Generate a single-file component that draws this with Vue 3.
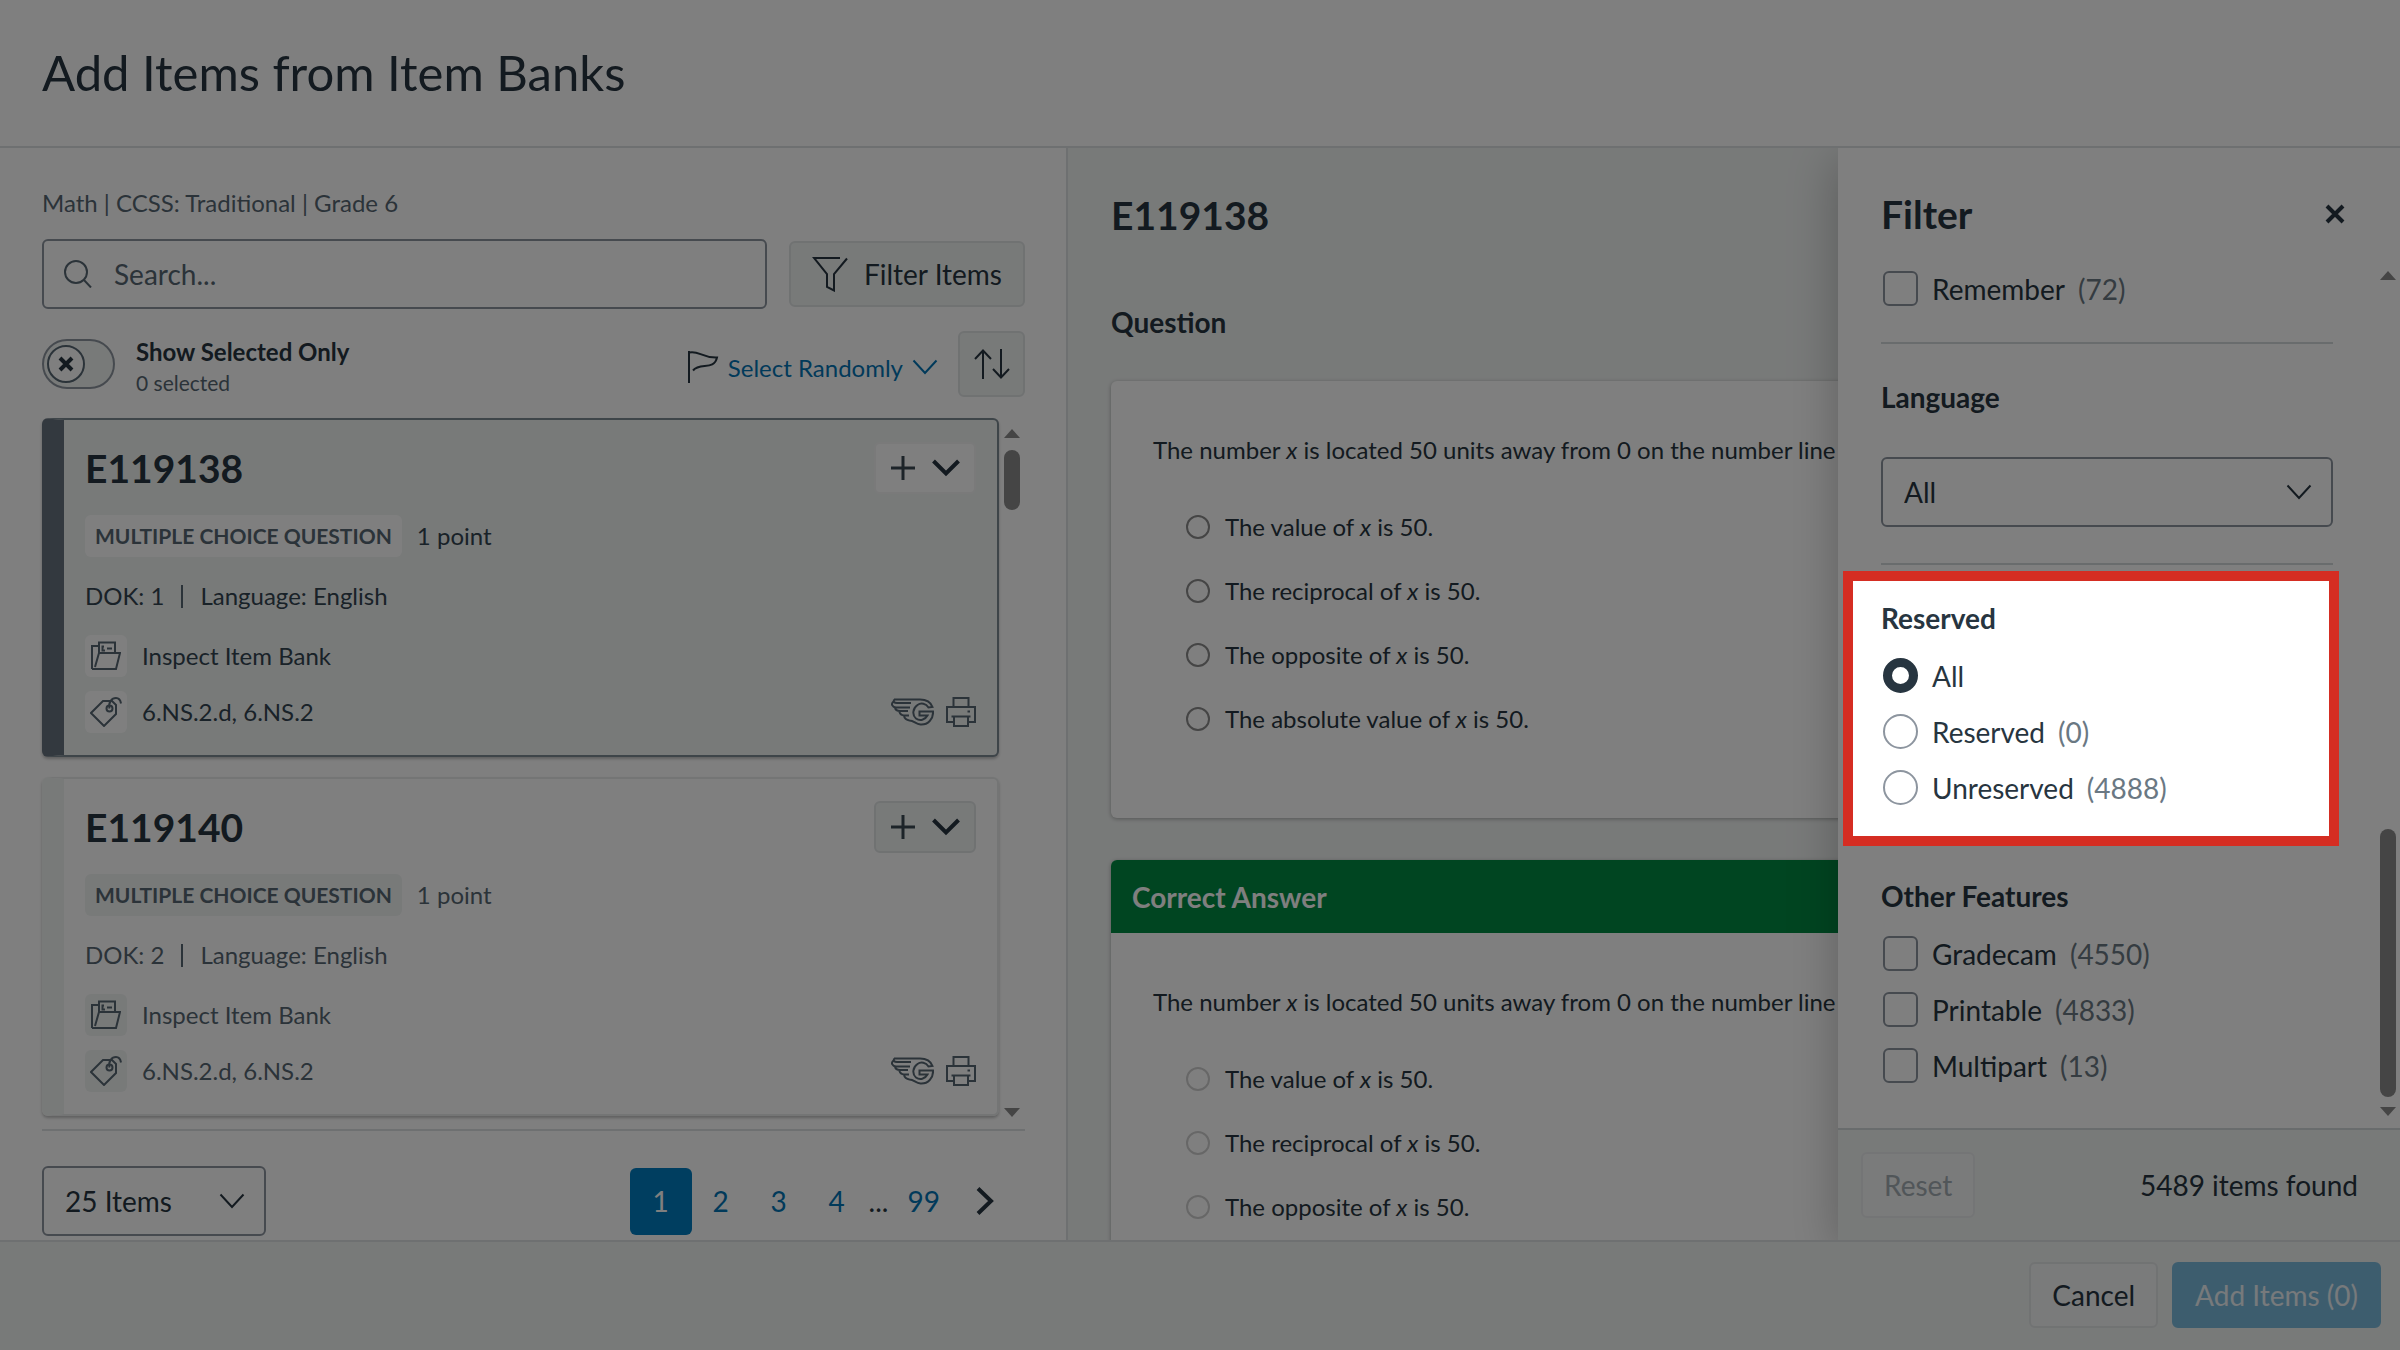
<script setup>
import { ref } from 'vue'

const items = [
  { id: 'E119138', points: '1 point', dok: 1, active: true },
  { id: 'E119140', points: '1 point', dok: 2, active: false },
]

const answers = ['value', 'reciprocal', 'opposite', 'absolute value']

const pages = [2, 3, 4]

const reservedOptions = [
  { value: 'all', label: 'All', count: '' },
  { value: 'reserved', label: 'Reserved', count: '(0)' },
  { value: 'unreserved', label: 'Unreserved', count: '(4888)' },
]

const features = [
  { label: 'Gradecam', count: '(4550)' },
  { label: 'Printable', count: '(4833)' },
  { label: 'Multipart', count: '(13)' },
]

const search = ref('')
const showSelected = ref(false)
const reserved = ref('all')
const language = ref('All')
const pageSize = ref('25 Items')
</script>

<template>
  <div class="page">
    <header class="page-header">
      <h1>Add Items from Item Banks</h1>
    </header>

    <main class="body">
      <section class="browser">
        <p class="crumbs">Math | CCSS: Traditional | Grade 6</p>

        <div class="search-row">
          <label class="search">
            <svg class="icon" width="28" height="28" viewBox="0 0 28 28" aria-hidden="true">
              <circle cx="12" cy="12" r="11" />
              <path d="M19.500 19.500 L27 27.500" />
            </svg>
            <input v-model="search" type="text" placeholder="Search..." aria-label="Search items" />
          </label>
          <button type="button" class="btn filter-btn">
            <svg class="icon dark" width="36" height="36" viewBox="0 0 36 36" aria-hidden="true">
              <path d="M28 2 H2 L15 18 V31 L22 34.500 V18 L35 2.500" />
            </svg>
            Filter Items
          </button>
        </div>

        <div class="tool-row">
          <label class="toggle">
            <span class="switch">
              <input v-model="showSelected" type="checkbox" />
              <span class="knob">
                <svg width="16" height="16" viewBox="0 0 16 16" aria-hidden="true">
                  <path d="M2 2 L14 14 M14 2 L2 14" />
                </svg>
              </span>
            </span>
            <span class="toggle-text">
              <b>Show Selected Only</b>
              <small>0 selected</small>
            </span>
          </label>
          <a class="random" href="#">
            <svg class="icon dark" width="32" height="34" viewBox="0 0 32 34" aria-hidden="true">
              <path d="M2 1 V33 M2 2.500 C12 0 14 8 30 7.500 C27 21 13 12 6 20.500" />
            </svg>
            Select Randomly
            <svg class="icon link-icon" width="26" height="16" viewBox="0 0 26 16" aria-hidden="true">
              <path d="M1.500 1.500 L13 14 L24.500 1.500" />
            </svg>
          </a>
          <button type="button" class="btn sort-btn" aria-label="Sort">
            <svg class="icon dark" width="36" height="32" viewBox="0 0 36 32" aria-hidden="true">
              <path d="M9 31 V3 M1 11 L9 2.500 L17 11 M27 1 V29 M19 21 L27 29.500 L35 21" />
            </svg>
          </button>
        </div>

        <div class="list-area">
          <div class="list">
            <article v-for="item in items" :key="item.id" class="card" :class="{ active: item.active }">
              <div class="card-head">
                <h2>{{ item.id }}</h2>
                <div class="add-group">
                  <button type="button" aria-label="Add item">
                    <svg width="24" height="24" viewBox="0 0 24 24" aria-hidden="true">
                      <path class="plus" d="M12 0 V24 M0 12 H24" />
                    </svg>
                  </button>
                  <button type="button" aria-label="More options">
                    <svg width="28" height="18" viewBox="0 0 28 18" aria-hidden="true">
                      <path d="M1.500 2 L14 14.500 L26.500 2" />
                    </svg>
                  </button>
                </div>
              </div>
              <div class="card-line">
                <span class="type">MULTIPLE CHOICE QUESTION</span>
                <span>{{ item.points }}</span>
              </div>
              <div class="card-meta">
                <span>DOK: {{ item.dok }}</span>
                <i class="bar"></i>
                <span>Language: English</span>
              </div>
              <div class="card-foot">
                <div class="sources">
                  <div class="source">
                    <span class="chip">
                      <svg class="icon" width="30" height="30" viewBox="0 0 30 30" aria-hidden="true">
                        <path d="M1 28 V5 H8 M1 28 H25 L29 12 H8 L4 26 M8 12 V1.500 H24 V12 M13 5.500 H11.500 V9.500 H14 M16 7.500 H21" />
                      </svg>
                    </span>
                    Inspect Item Bank
                  </div>
                  <div class="source">
                    <span class="chip">
                      <svg class="icon" width="32" height="30" viewBox="0 0 32 30" aria-hidden="true">
                        <path d="M13 4 H22 L26 8 V17 L14 29 L1 16 Z" />
                        <circle cx="19.500" cy="11.500" r="3" />
                        <path d="M19.500 11.500 C18 5 22 1 26 1 C29 1 30.500 3.500 31 6.500" />
                      </svg>
                    </span>
                    6.NS.2.d, 6.NS.2
                  </div>
                </div>
                <div class="formats">
                  <svg class="icon" width="43" height="28" viewBox="0 0 43 28" aria-hidden="true">
                    <path d="M3 1.500 H29 C36 1.500 40 5 41.500 9 L37.500 9.500 C35 5.500 30 4.500 26.500 7 C21.500 10.500 21 17 25 20.500 C29 23.500 34 22 36.500 17.500 H28.500 V13.500 H42 C42.500 21 37 27 29.500 26.500 C24.500 26 23 22.500 18.500 22.500 C15.500 22 13.500 20 13 18 M3 1.500 C2.500 4 3 5 6 5 H20 M2.500 3.500 C-0.500 6 1.500 9.500 5 9.500 H19 M4 9.500 C4.500 12.500 6.500 13 9 13 H17 M8 13 C9 16 11 17.500 13 17.500 H18" />
                  </svg>
                  <svg class="icon" width="30" height="30" viewBox="0 0 30 30" aria-hidden="true">
                    <path d="M7.500 10 V1 H22.500 V10 M7.500 25 H1 V10 H29 V25 H22.500 M5.500 19.500 H24.500 M8 19.500 V29 H22 V19.500 M21.500 14.500 H24" />
                  </svg>
                </div>
              </div>
            </article>
          </div>
          <div class="scroller" aria-hidden="true">
            <i class="up"></i>
            <i class="thumb short"></i>
            <i class="down"></i>
          </div>
        </div>

        <div class="pager">
          <div class="select small-select">
            <select v-model="pageSize" aria-label="Items per page">
              <option>25 Items</option>
            </select>
            <svg class="icon dark" width="26" height="16" viewBox="0 0 26 16" aria-hidden="true">
              <path d="M1.500 1.500 L13 14 L24.500 1.500" />
            </svg>
          </div>
          <nav class="pages" aria-label="Pages">
            <button type="button" class="current">1</button>
            <button v-for="page in pages" :key="page" type="button">{{ page }}</button>
            <span class="dots">...</span>
            <button type="button">99</button>
            <button type="button" aria-label="Next page">
              <svg width="18" height="28" viewBox="0 0 18 28" aria-hidden="true">
                <path d="M2 1.500 L15 14 L2 26.500" />
              </svg>
            </button>
          </nav>
        </div>
      </section>

      <section class="preview">
        <h2>E119138</h2>
        <h3>Question</h3>
        <div class="question">
          <div class="question-body">
            <p>The number <em>x</em> is located 50 units away from 0 on the number line</p>
            <div class="options">
              <label v-for="answer in answers" :key="answer">
                <input type="radio" name="question" />
                <span>The {{ answer }} of <em>x</em> is 50.</span>
              </label>
            </div>
          </div>
        </div>
        <div class="question">
          <h3 class="correct">Correct Answer</h3>
          <div class="question-body">
            <p>The number <em>x</em> is located 50 units away from 0 on the number line</p>
            <div class="options">
              <label v-for="answer in answers.slice(0, 3)" :key="answer">
                <input type="radio" name="solution" disabled />
                <span>The {{ answer }} of <em>x</em> is 50.</span>
              </label>
            </div>
          </div>
        </div>
      </section>

      <aside class="drawer">
        <div class="drawer-head">
          <h2>Filter</h2>
          <button type="button" aria-label="Close">
            <svg width="20" height="20" viewBox="0 0 20 20" aria-hidden="true">
              <path d="M2 2 L18 18 M18 2 L2 18" />
            </svg>
          </button>
        </div>
        <div class="drawer-scroll">
          <div class="drawer-content">
            <section class="group">
              <label class="choice">
                <input type="checkbox" />
                <span>Remember</span>
                <span class="count">(72)</span>
              </label>
            </section>
            <hr />
            <section class="group">
              <label class="group-title" for="language">Language</label>
              <div class="select wide-select">
                <select id="language" v-model="language">
                  <option>All</option>
                </select>
                <svg class="icon dark" width="26" height="16" viewBox="0 0 26 16" aria-hidden="true">
                  <path d="M1.500 1.500 L13 14 L24.500 1.500" />
                </svg>
              </div>
            </section>
            <hr />
            <section class="group spotlight">
              <h3 class="group-title">Reserved</h3>
              <label v-for="option in reservedOptions" :key="option.value" class="choice">
                <input v-model="reserved" type="radio" name="reserved" :value="option.value" />
                <span>{{ option.label }}</span>
                <span v-if="option.count" class="count">{{ option.count }}</span>
              </label>
            </section>
            <hr />
            <section class="group">
              <h3 class="group-title">Other Features</h3>
              <label v-for="feature in features" :key="feature.label" class="choice">
                <input type="checkbox" />
                <span>{{ feature.label }}</span>
                <span class="count">{{ feature.count }}</span>
              </label>
            </section>
          </div>
          <div class="scroller" aria-hidden="true">
            <i class="up"></i>
            <i class="thumb long"></i>
            <i class="down"></i>
          </div>
        </div>
        <div class="drawer-foot">
          <button type="button" class="btn ghost" disabled>Reset</button>
          <span>5489 items found</span>
        </div>
      </aside>
    </main>

    <footer class="page-footer">
      <button type="button" class="btn ghost">Cancel</button>
      <button type="button" class="btn primary" disabled>Add Items (0)</button>
    </footer>
  </div>
</template>

<style>
body {
  margin: 0;
}
</style>

<style scoped>
* {
  box-sizing: border-box;
}

.page {
  --ink: #273540;
  --soft: #576773;
  --edge: #8d959f;
  --line: #dce1e2;
  --mist: #f1f4f3;
  --link: #0374b5;
  position: relative;
  display: flex;
  flex-direction: column;
  height: 100vh;
  overflow: hidden;
  background: #fff;
  color: var(--ink);
  font-family: Lato, "Liberation Sans", sans-serif;
  font-size: 28px;
  line-height: 36px;
}

h1,
h2,
h3,
p {
  margin: 0;
}

h1 {
  font-size: 49px;
  line-height: 56px;
  font-weight: 400;
}

h2 {
  font-size: 39px;
  line-height: 48px;
  font-weight: 700;
}

h3 {
  font-size: 28px;
  line-height: 36px;
  font-weight: 700;
}

button,
input,
select {
  margin: 0;
  font: inherit;
  color: inherit;
}

button {
  padding: 0;
  border: 0;
  background: none;
}

svg {
  display: block;
  flex: none;
  fill: none;
  stroke: var(--ink);
  stroke-width: 4px;
}

.icon {
  stroke: var(--soft);
  stroke-width: 2px;
}

.icon.dark {
  stroke: var(--ink);
}

.icon.link-icon {
  stroke: var(--link);
}

.plus {
  stroke: #3a4853;
  stroke-width: 3px;
}

.page-header,
.page-footer {
  position: relative;
  z-index: 1;
  flex: none;
}

.page-header {
  display: flex;
  align-items: center;
  padding: 44px 42px 46px;
  border-bottom: 2px solid var(--line);
  background: #fff;
}

.body {
  position: relative;
  display: flex;
  flex: 1;
  min-height: 0;
}

.btn {
  display: flex;
  align-items: center;
  justify-content: center;
  height: 66px;
  padding: 0 21px;
  border: 2px solid #e0e4e5;
  border-radius: 6px;
  background: var(--mist);
}

/* Item list */

.browser {
  display: flex;
  flex: none;
  flex-direction: column;
  width: 44.5%;
  padding: 37px 41px 0 42px;
  border-right: 2px solid var(--line);
}

.crumbs {
  color: var(--soft);
  font-size: 24px;
}

.search-row {
  display: flex;
  align-items: center;
  gap: 22px;
  margin-top: 18px;
}

.search {
  display: flex;
  flex: 1;
  align-items: center;
  gap: 22px;
  height: 70px;
  padding: 0 20px;
  border: 2px solid var(--edge);
  border-radius: 6px;
}

.search input {
  flex: 1;
  min-width: 0;
  padding: 0;
  border: 0;
  outline: 0;
  background: none;
}

.search input::placeholder {
  color: var(--soft);
  opacity: 1;
}

.filter-btn {
  gap: 16px;
}

.tool-row {
  display: flex;
  align-items: center;
  height: 66px;
  margin-top: 22px;
}

.toggle {
  display: flex;
  flex: 1;
  align-items: center;
  gap: 21px;
}

.switch {
  display: flex;
  align-items: center;
  width: 73px;
  height: 50px;
  padding: 0 3px;
  border: 2px solid var(--edge);
  border-radius: 25px;
  background: var(--mist);
}

.switch input {
  position: absolute;
  opacity: 0;
}

.knob {
  display: flex;
  align-items: center;
  justify-content: center;
  width: 38px;
  height: 38px;
  border: 2px solid var(--soft);
  border-radius: 50%;
  background: #fff;
}

.toggle-text,
.random {
  padding-top: 6px;
  font-size: 24px;
  line-height: 31px;
}

.toggle-text b,
.toggle-text small {
  display: block;
}

.toggle-text small {
  color: var(--soft);
  font-size: 21px;
}

.random {
  display: flex;
  align-items: center;
  gap: 9px;
  color: var(--link);
  text-decoration: none;
}

.sort-btn {
  width: 67px;
  margin-left: 20px;
  padding: 0;
}

.list-area {
  display: flex;
  flex: 1;
  min-height: 0;
  margin-top: 21px;
  border-bottom: 2px solid var(--line);
}

.list {
  display: flex;
  flex: 1;
  flex-direction: column;
  gap: 20px;
}

.card {
  display: flex;
  flex-direction: column;
  gap: 21px;
  padding: 22px 21px 22px;
  border: 2px solid #e8ebeb;
  border-left: 22px solid var(--mist);
  border-radius: 6px;
  box-shadow: 0 2px 3px rgba(0, 0, 0, 0.25);
  color: var(--soft);
  font-size: 24px;
}

.card h2 {
  color: var(--ink);
}

.card.active {
  border-color: #7d8a93;
  border-left-color: #66737f;
  background: var(--mist);
  color: #334451;
}

.card-head {
  display: flex;
  align-items: center;
  justify-content: space-between;
}

.add-group {
  display: flex;
  align-items: center;
  justify-content: space-between;
  height: 52px;
  width: 102px;
  padding: 0 14px 0 15px;
  border: 2px solid #e0e4e5;
  border-radius: 6px;
  background: var(--mist);
}

.active .add-group {
  border-color: #f4f5f5;
  background: #fff;
}

.card-line {
  display: flex;
  align-items: center;
  gap: 15px;
}

.type {
  padding: 0 10px;
  border-radius: 6px;
  background: var(--mist);
  color: var(--soft);
  font-size: 21px;
  font-weight: 700;
  line-height: 42px;
}

.active .type,
.active .chip {
  background: #fff;
}

.card-meta {
  display: flex;
  align-items: center;
  gap: 17px;
}

.bar {
  width: 2px;
  height: 23px;
  background: var(--soft);
}

.card-foot {
  display: flex;
  align-items: flex-end;
  justify-content: space-between;
}

.sources {
  display: flex;
  flex-direction: column;
  gap: 14px;
}

.source {
  display: flex;
  align-items: center;
  gap: 15px;
}

.chip {
  display: flex;
  align-items: center;
  justify-content: center;
  width: 42px;
  height: 42px;
  border-radius: 6px;
  background: var(--mist);
}

.formats {
  display: flex;
  align-items: center;
  gap: 12px;
  height: 42px;
}

.scroller {
  display: flex;
  flex: none;
  flex-direction: column;
  align-items: center;
  width: 26px;
  padding: 11px 0 12px;
}

.drawer .scroller {
  width: 24px;
}

.up,
.down {
  border: 8px solid transparent;
}

.up {
  border-top: 0;
  border-bottom: 9px solid #8a8a8a;
}

.down {
  margin-top: auto;
  border-bottom: 0;
  border-top: 9px solid #8a8a8a;
}

.thumb {
  width: 16px;
  border-radius: 8px;
  background: #8a8a8a;
}

.short {
  height: 60px;
  margin-top: 12px;
}

.long {
  height: 268px;
  margin-top: auto;
}

.long + .down {
  margin-top: 10px;
}

.pager {
  display: flex;
  align-items: center;
  justify-content: space-between;
  margin: 35px 11px 4px 0;
}

.select {
  position: relative;
  height: 70px;
}

.select select {
  appearance: none;
  width: 100%;
  height: 100%;
  padding: 0 21px;
  border: 2px solid var(--edge);
  border-radius: 6px;
  background: #fff;
}

.select svg {
  position: absolute;
  top: 27px;
  right: 21px;
  pointer-events: none;
}

.small-select {
  width: 224px;
}

.pages {
  display: flex;
  align-items: center;
  color: var(--link);
}

.pages button {
  display: flex;
  align-items: center;
  justify-content: center;
  min-width: 58px;
  height: 67px;
  padding: 0 16px;
}

.pages .current {
  width: 62px;
  border-radius: 6px;
  background: #007cc0;
  color: #fff;
}

.dots {
  width: 26px;
  color: var(--ink);
  text-align: center;
}

/* Item preview */

.preview {
  flex: 1;
  min-width: 0;
  padding: 43px 43px 0;
  overflow: hidden;
  background: var(--mist);
}

.preview h2 {
  margin-bottom: 65px;
}

.question {
  margin: 41px 0 42px;
  border-radius: 6px;
  background: #fff;
  box-shadow: 0 1px 4px rgba(0, 0, 0, 0.3);
  font-size: 24px;
  white-space: nowrap;
}

.correct {
  padding: 19px 21px 18px;
  border-radius: 6px 6px 0 0;
  background: #008a42;
  color: #fff;
}

.question-body {
  padding: 51px 42px 81px;
}

.options {
  display: flex;
  flex-direction: column;
  gap: 28px;
  margin: 41px 0 0 33px;
}

.options label {
  display: flex;
  align-items: center;
  gap: 15px;
}

.options input {
  appearance: none;
  width: 24px;
  height: 24px;
  border: 2px solid #8a8a8a;
  border-radius: 50%;
}

.options input:disabled {
  border-color: #cfcfcf;
}

/* Filter drawer */

.drawer {
  position: absolute;
  top: 0;
  right: 0;
  bottom: 0;
  display: flex;
  flex-direction: column;
  width: 562px;
  background: #fff;
  box-shadow: 0 12px 46px rgba(0, 0, 0, 0.26);
}

.drawer-head {
  display: flex;
  align-items: center;
  justify-content: space-between;
  padding: 42px 55px 22px 43px;
}

.drawer-scroll {
  display: flex;
  flex: 1;
}

.drawer-content {
  flex: 1;
  padding: 11px 43px 0;
}

.group {
  display: flex;
  flex-direction: column;
  gap: 21px;
}

.group-title {
  font-weight: 700;
  line-height: 34px;
}

.group-title + .choice {
  margin-top: 2px;
}

.wide-select {
  margin-top: 22px;
}

hr {
  height: 2px;
  margin: 36px 0;
  border: 0;
  background: #d3d9db;
}

.choice {
  display: flex;
  align-items: center;
  height: 35px;
}

.choice input {
  appearance: none;
  width: 35px;
  height: 35px;
  margin: 0 14px 0 2px;
  border: 2px solid var(--edge);
  border-radius: 6px;
  background: #fff;
}

.choice input[type="radio"] {
  border-radius: 50%;
}

.choice input[type="radio"]:checked {
  border: 9px solid var(--ink);
}

.count {
  margin-left: 13px;
  color: #6a7883;
}

/* Highlights one filter group and dims the rest of the page */
.spotlight {
  position: relative;
}

.spotlight::after {
  content: "";
  position: absolute;
  z-index: 10;
  inset: -30px -6px -41px -38px;
  border: 10px solid #d52d22;
  box-shadow: 0 0 0 4000px rgba(0, 0, 0, 0.5);
  pointer-events: none;
}

.drawer-foot {
  display: flex;
  align-items: center;
  justify-content: space-between;
  padding: 22px 42px 22px 23px;
  border-top: 2px solid #d3d9db;
  background: var(--mist);
}

.ghost {
  border-color: #e3e6e7;
  background: #f5f6f6;
}

.ghost:disabled {
  border-color: #e8ebec;
  color: #a3acb3;
}

.page-footer {
  display: flex;
  justify-content: flex-end;
  gap: 14px;
  padding: 20px 19px 22px;
  border-top: 2px solid var(--line);
  background: var(--mist);
}

.primary {
  border-color: #7bbbdd;
  background: #7bbbdd;
  color: #eef4f8;
}
</style>
